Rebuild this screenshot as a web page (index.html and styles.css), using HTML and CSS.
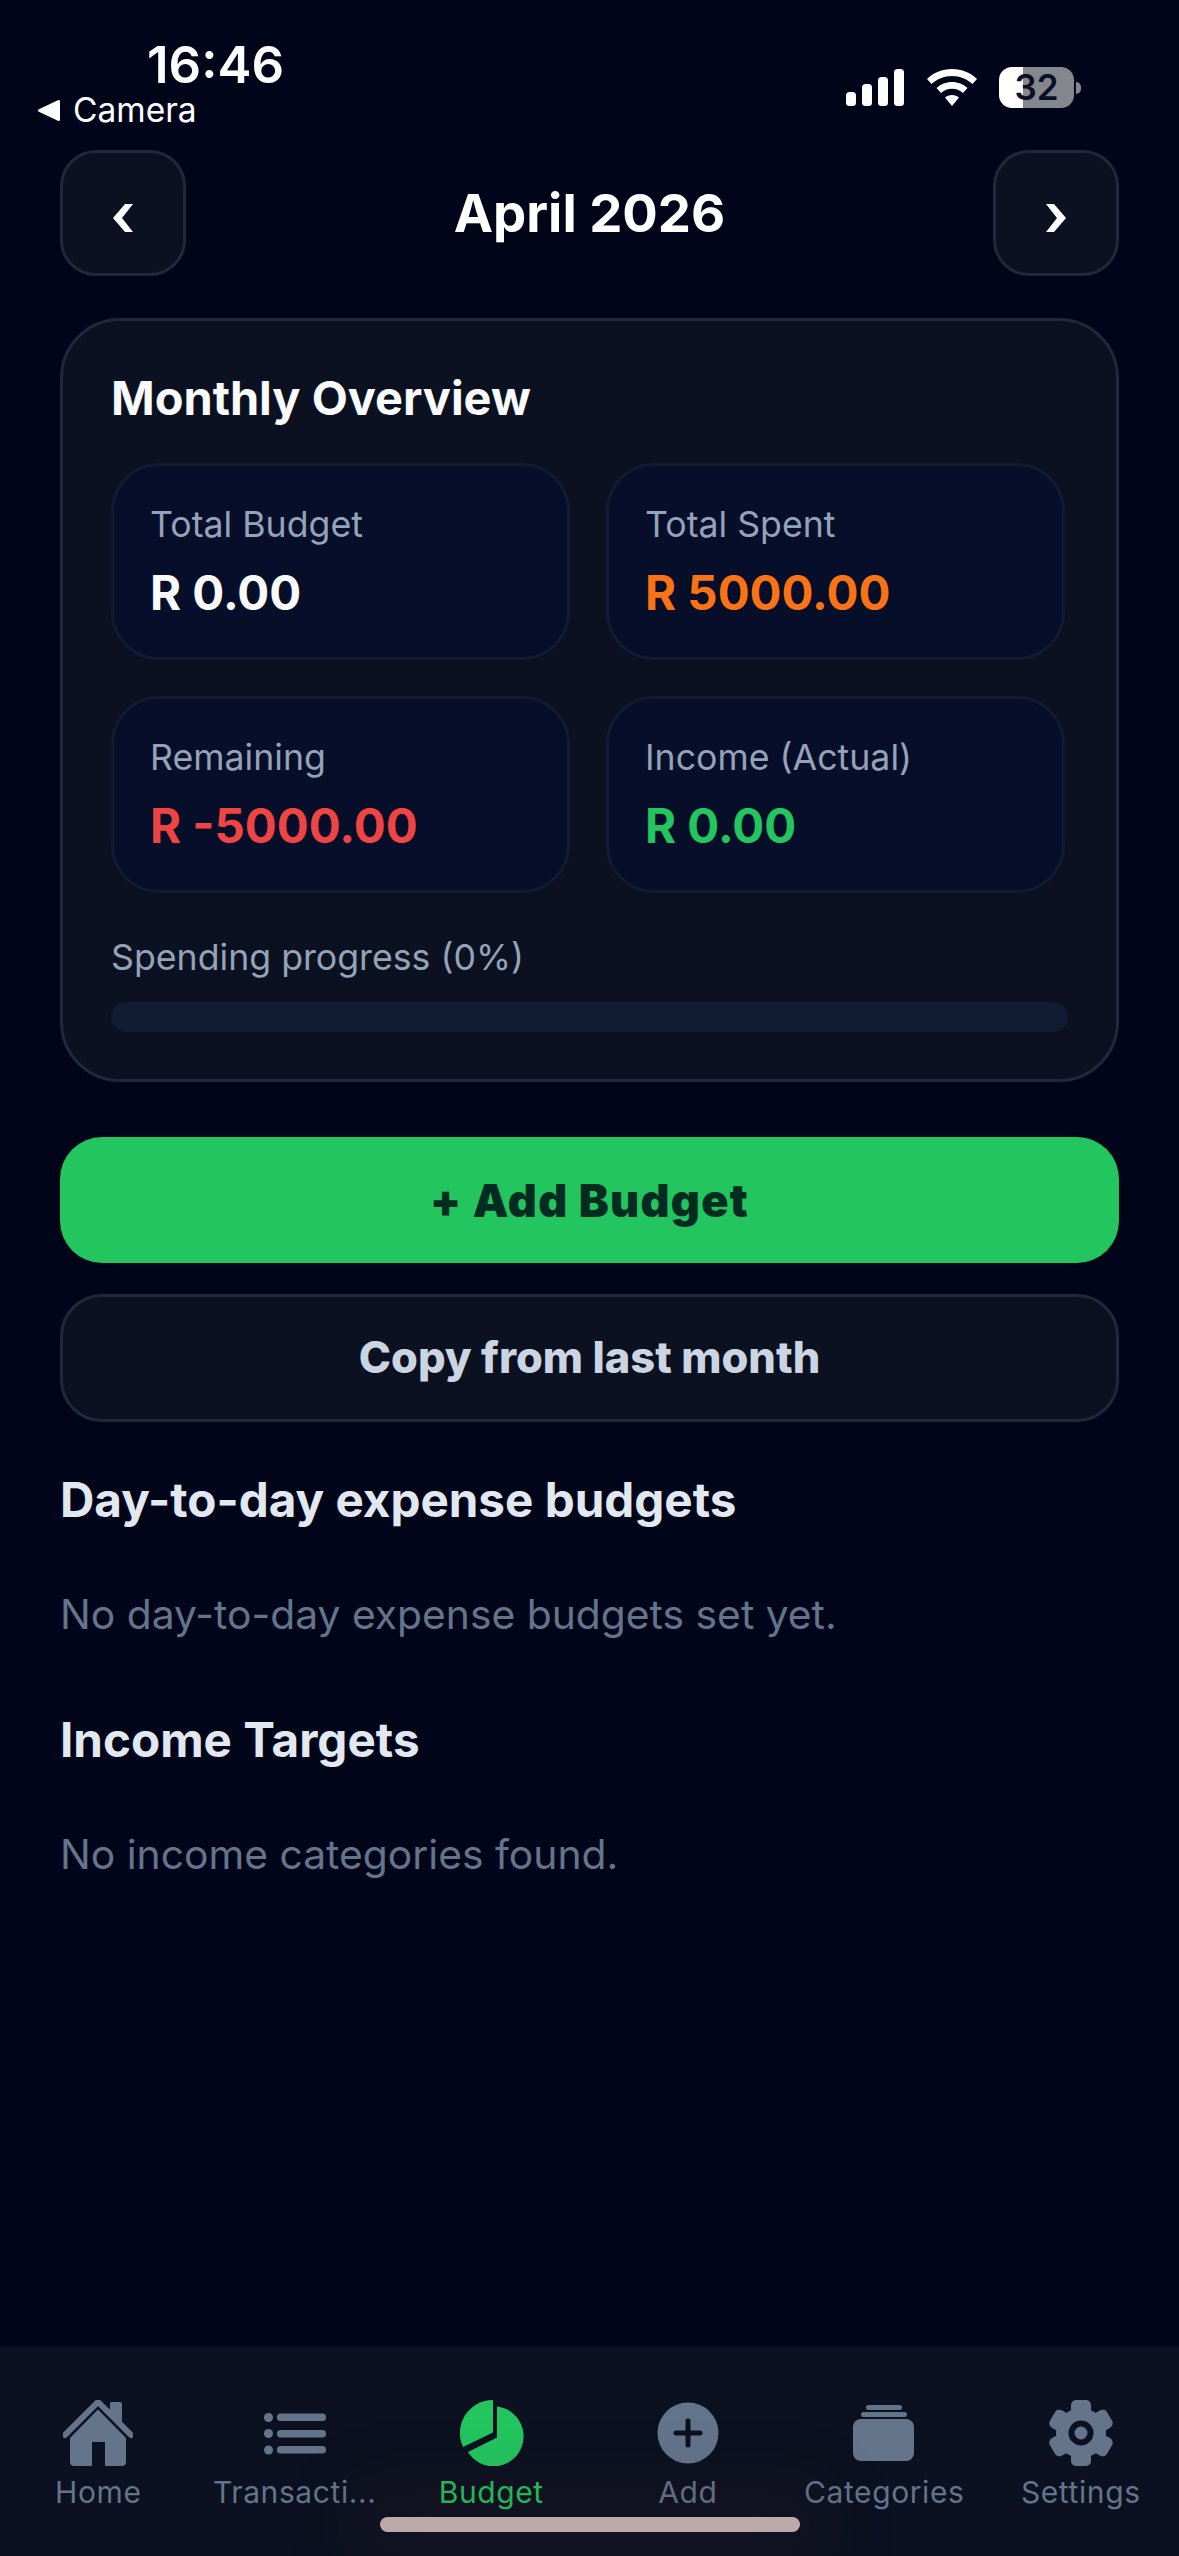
FILE: index.html
```html
<!DOCTYPE html>
<html lang="en">
<head>
<meta charset="utf-8">
<title>Budget</title>
<link rel="stylesheet" href="styles.css">
</head>
<body>
<div class="app">
  <header class="status">
    <div class="status-left">
      <div class="time">16:46</div>
      <div class="back"><svg class="back-arrow" viewBox="0 0 22 21"><path d="M20.500 1.500V19.500L1.500 10.500Z"/></svg><span>Camera</span></div>
    </div>
    <div class="status-right">
      <svg class="signal" viewBox="0 0 58 37"><rect x="0" y="23" width="10" height="14" rx="3.500"/><rect x="16" y="15" width="10" height="22" rx="3.500"/><rect x="32" y="8" width="10" height="29" rx="3.500"/><rect x="48" y="0" width="10" height="37" rx="3.500"/></svg>
      <svg class="wifi" viewBox="0 0 50 37"><path d="M25 0C35 0 43.500 3.800 50 10L45.500 15C40 10 33 7 25 7S10 10 4.500 15L0 10C6.500 3.800 15 0 25 0Z"/><path d="M25 13C31 13 36.500 15.300 40.500 19L36 24C33 21.300 29.200 19.800 25 19.800S17 21.300 14 24L9.500 19C13.500 15.300 19 13 25 13Z"/><path d="M25 26C27.800 26 30.300 27 32 28.600L25 37L18 28.600C19.700 27 22.200 26 25 26Z"/></svg>
      <div class="battery"><div class="battery-body">32</div><div class="battery-cap"></div></div>
    </div>
  </header>

  <main class="main">
    <div class="month-row">
      <button class="month-btn"><svg class="chev" viewBox="0 0 21 28"><path d="M12 0H20L9 14 20 28H12L0 14Z"/></svg></button>
      <h1 class="month-title">April 2026</h1>
      <button class="month-btn"><svg class="chev" viewBox="0 0 21 28"><path d="M9 0H1L12 14 1 28H9L21 14Z"/></svg></button>
    </div>

    <section class="card">
      <h2 class="card-title">Monthly Overview</h2>
      <div class="stats">
        <div class="stat"><div class="stat-label">Total Budget</div><div class="stat-value">R 0.00</div></div>
        <div class="stat"><div class="stat-label">Total Spent</div><div class="stat-value orange">R 5000.00</div></div>
        <div class="stat"><div class="stat-label">Remaining</div><div class="stat-value red">R -5000.00</div></div>
        <div class="stat"><div class="stat-label">Income (Actual)</div><div class="stat-value green">R 0.00</div></div>
      </div>
      <div class="progress-label">Spending progress (0%)</div>
      <div class="progress"></div>
    </section>

    <button class="btn btn-primary">+ Add Budget</button>
    <button class="btn btn-secondary">Copy from last month</button>

    <h3 class="section-title">Day-to-day expense budgets</h3>
    <p class="empty">No day-to-day expense budgets set yet.</p>
    <h3 class="section-title second">Income Targets</h3>
    <p class="empty">No income categories found.</p>
  </main>

  <nav class="tabs">
    <div class="tab">
      <svg class="tab-icon" viewBox="0 0 70 66"><path class="fill" d="M35 9.500 63 38V62Q63 66 59 66H42V42H29V66H11Q7 66 7 62V38Z"/><path class="fill" d="M47 3Q47 2 49 2H57Q59 2 59 4V24L47 12Z"/><path class="line" d="M2 35 35 2 68 35"/></svg>
      <span class="tab-label">Home</span>
    </div>
    <div class="tab">
      <svg class="tab-icon" viewBox="0 0 62 66"><circle class="fill" cx="4.500" cy="17.500" r="4.500"/><circle class="fill" cx="4.500" cy="33.500" r="4.500"/><circle class="fill" cx="4.500" cy="50" r="4.500"/><rect class="fill" x="13" y="13.500" width="49" height="7.500" rx="3.500"/><rect class="fill" x="13" y="30" width="49" height="7.500" rx="3.500"/><rect class="fill" x="13" y="46" width="49" height="7.500" rx="3.500"/></svg>
      <span class="tab-label">Transacti...</span>
    </div>
    <div class="tab active">
      <svg class="tab-icon" viewBox="0 0 66 66"><path class="fill" d="M39 6.500A30 30 0 1 1 10 52L39 37.500Z"/><path class="fill" d="M35 0V32.500L5 47A33 33 0 0 1 35 0Z"/></svg>
      <span class="tab-label">Budget</span>
    </div>
    <div class="tab">
      <svg class="tab-icon" viewBox="0 0 62 66"><circle class="fill" cx="31" cy="33" r="30.500"/><path class="cut" d="M31 21V45M19 33H43"/></svg>
      <span class="tab-label">Add</span>
    </div>
    <div class="tab">
      <svg class="tab-icon" viewBox="0 0 62 66"><rect class="fill" x="13" y="5" width="36" height="5" rx="2.500"/><rect class="fill" x="8" y="12" width="46" height="5" rx="2.500"/><rect class="fill" x="0" y="19" width="61" height="42" rx="8"/></svg>
      <span class="tab-label">Categories</span>
    </div>
    <div class="tab">
      <svg class="tab-icon" viewBox="0 0 66 66"><g transform="translate(33 33)"><circle class="fill" r="25"/><rect class="fill" x="-10" y="-33" width="20" height="18" rx="5"/><rect class="fill" x="-10" y="-33" width="20" height="18" rx="5" transform="rotate(60)"/><rect class="fill" x="-10" y="-33" width="20" height="18" rx="5" transform="rotate(120)"/><rect class="fill" x="-10" y="-33" width="20" height="18" rx="5" transform="rotate(180)"/><rect class="fill" x="-10" y="-33" width="20" height="18" rx="5" transform="rotate(240)"/><rect class="fill" x="-10" y="-33" width="20" height="18" rx="5" transform="rotate(300)"/><circle class="hole" r="9.500"/></g></svg>
      <span class="tab-label">Settings</span>
    </div>
    <div class="home-indicator"></div>
  </nav>
</div>
</body>
</html>
```
FILE: styles.css
```css
* { box-sizing: border-box; }
html, body { margin: 0; padding: 0; }
body { background: #01051a; font-family: Inter, "Noto Sans", sans-serif; color: #f8fafc; }
.app { width: 1179px; height: 2556px; display: flex; flex-direction: column; overflow: hidden; background: #01051a; }

/* status bar */
.status { height: 150px; flex: none; display: flex; justify-content: space-between; }
.status-left { padding: 39px 0 0 38px; }
.time { margin-left: 109px; font-size: 51px; line-height: 52px; font-weight: 600; color: #fff; }
.back { display: flex; align-items: center; gap: 13px; font-size: 33.500px; line-height: 38px; font-weight: 400; color: #fff; margin-top: 0; }
.back-arrow { width: 22px; height: 21px; fill: #fff; stroke: #fff; stroke-width: 3; stroke-linejoin: round; }
.status-right { display: flex; align-items: flex-start; padding: 67px 98px 0 0; }
.signal { width: 58px; height: 37px; margin: 2px 23px 0 0; fill: #fff; }
.wifi { width: 50px; height: 37px; margin: 2px 22px 0 0; fill: #fff; }
.battery { display: flex; align-items: center; }
.battery-body { width: 75px; height: 41px; border-radius: 13px; background: linear-gradient(90deg, #fff 32%, #85878f 32%); color: #0b0f24; font-size: 35px; line-height: 41px; font-weight: 600; text-align: center; }
.battery-cap { width: 5px; height: 12px; margin-left: 2px; border-radius: 0 6px 6px 0; background: #85878f; }

/* main */
.main { flex: 1; padding: 0 60px; min-height: 0; }
.month-row { display: flex; justify-content: space-between; align-items: center; }
.month-btn { width: 126px; height: 126px; padding: 0; display: flex; align-items: center; justify-content: center; background: #0b1120; border: 3px solid #1e293b; border-radius: 36px; }
.chev { width: 21px; height: 28px; fill: #fff; margin-top: 10px; }
.month-title { margin: 0; font-size: 52.700px; line-height: 66px; font-weight: 700; color: #fff; }

.card { margin-top: 42px; height: 764px; padding: 47px 48px 0; background: #0b1120; border: 3px solid #1e293b; border-radius: 60px; }
.card-title { margin: 0; font-size: 46.900px; line-height: 60px; font-weight: 700; color: #f8fafc; }
.stats { margin-top: 35px; display: grid; grid-template-columns: 459px 459px; gap: 36px; }
.stat { height: 197px; padding: 34px 36px 0; background: #060e29; border: 3px solid #121b31; border-radius: 48px; }
.stat-label { font-size: 35.700px; line-height: 48px; color: #94a3b8; }
.stat-value { margin-top: 18px; font-size: 47.400px; line-height: 54px; font-weight: 700; color: #f8fafc; }
.orange { color: #f97316; }
.red { color: #ef4444; }
.green { color: #22c55e; }
.progress-label { margin-top: 40px; font-size: 35.700px; line-height: 48px; color: #94a3b8; }
.progress { margin-top: 21px; height: 30px; width: 957px; border-radius: 15px; background: #111c33; }

.btn { display: block; width: 100%; height: 126px; font-family: inherit; font-size: 42px; border-radius: 42px; }
.btn-primary { margin-top: 55px; background: #22c55e; border: 0; color: #022c22; font-size: 45px; letter-spacing: 1.250px; font-weight: 900; }
.btn-secondary { margin-top: 31px; height: 128px; padding-bottom: 4px; background: #0b1120; border: 3px solid #1e293b; color: #cbd5e1; font-size: 43.400px; font-weight: 800; }

.section-title { margin: 50px 0 0; font-size: 47.600px; line-height: 56px; font-weight: 700; color: #e2e8f0; }
.section-title.second { margin-top: 70px; }
.empty { margin: 58px 0 0; font-size: 40.800px; line-height: 56px; color: #64748b; }

/* tab bar */
.tabs { position: relative; flex: none; height: 210px; display: grid; grid-template-columns: repeat(6, 1fr); background: #0b1120; }
.tab { display: flex; flex-direction: column; align-items: center; padding-top: 54px; color: #64748b; }
.tab-icon { height: 66px; width: 70px; }
.fill { fill: #64748b; }
.line { fill: none; stroke: #64748b; stroke-width: 6; stroke-linecap: round; stroke-linejoin: round; }
.cut { fill: none; stroke: #0b1120; stroke-width: 5; stroke-linecap: round; }
.hole { fill: none; stroke: #0b1120; stroke-width: 6; }
.tab-label { margin-top: 7px; font-size: 30px; line-height: 38px; letter-spacing: 0.600px; white-space: nowrap; }
.active .fill { fill: #22c55e; }
.active .tab-label { color: #22c55e; }
.home-indicator { position: absolute; left: 380px; top: 171px; width: 420px; height: 15px; border-radius: 8px; background: #bcaaaa; box-shadow: 0 0 70px 30px rgba(70, 35, 45, 0.18); }
```
